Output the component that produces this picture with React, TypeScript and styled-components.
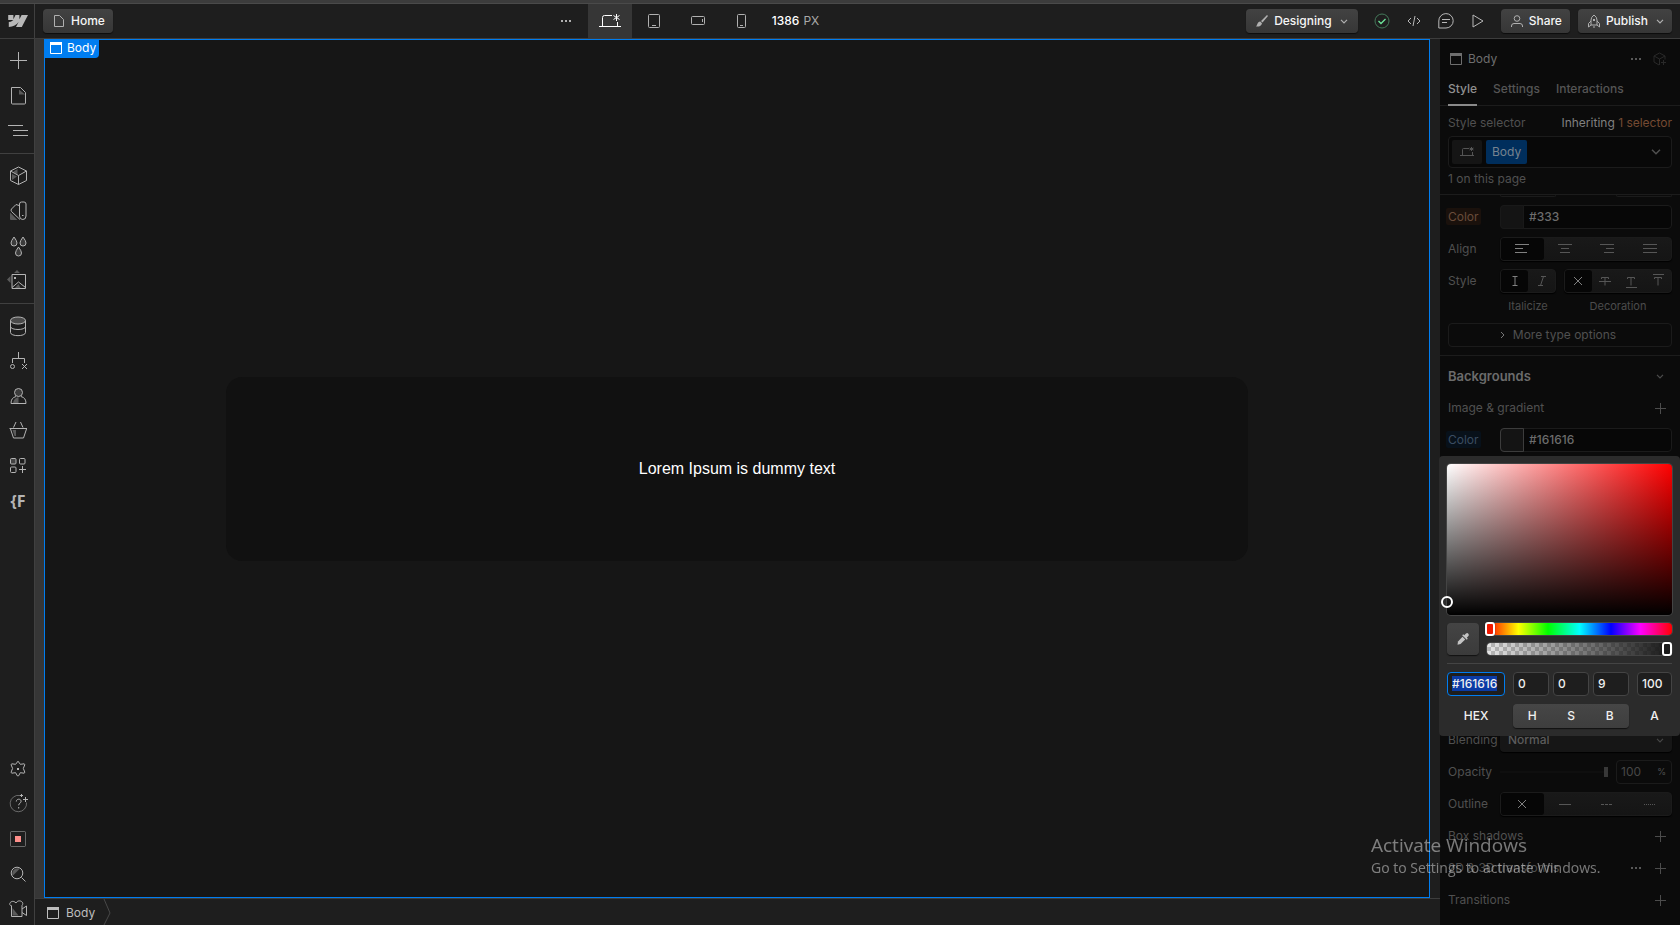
import React from "react";
import styled, { createGlobalStyle, css } from "styled-components";

const GlobalStyle = createGlobalStyle`
  *, *::before, *::after { box-sizing: border-box; }
  body { margin: 0; background: #1e1e1e; }
  body, button, input, select { font-family: Inter, "Liberation Sans", sans-serif; font-size: 12px; line-height: 16px; }
  button { border: 0; padding: 0; background: none; color: inherit; }
  h1, h2, p { margin: 0; }
`;

/* ---------- Icons ---------- */

type IconProps = { w?: number; h?: number; children: React.ReactNode };

const Svg = styled.svg`
  display: block;
  flex: none;
  fill: none;
  stroke: currentColor;
  stroke-width: 1;
  overflow: visible;
`;

const Icon = ({ w = 20, h = 20, children }: IconProps) => (
  <Svg width={w} height={h} viewBox={`0 0 ${w} ${h}`} aria-hidden="true">
    {children}
  </Svg>
);

const soft = { fill: "currentColor", fillOpacity: 0.4, stroke: "none" };
const solid = { fill: "currentColor", stroke: "none" };

const LogoIcon = () => (
  <Icon w={20} h={12}>
    <path {...solid} d="M20 0l-6.200 12H8l2.600-5C8.500 9.800 5.300 11.600 0.800 12V7.100s2.900-.2 4.600-2H.2V0h5.200v4.200L7.500 0h3.900v4.200L13.600 0z" />
  </Icon>
);
const WindowIcon = () => (
  <Icon w={12} h={12}>
    <path d="M.5.5h11v11H.5z" />
    <path {...solid} d="M0 0h12v3H0z" />
  </Icon>
);
const DotsIcon = () => (
  <Icon w={10} h={2}>
    <path {...solid} d="M0 0h2v2H0zM4 0h2v2H4zM8 0h2v2H8z" />
  </Icon>
);
const ChevronDown = ({ big }: { big?: boolean }) =>
  big ? (
    <Icon w={10} h={6}><path strokeWidth="1.500" d="M1 .8l4 4 4-4" /></Icon>
  ) : (
    <Icon w={8} h={5}><path strokeWidth="1.200" d="M1 .8l3 3 3-3" /></Icon>
  );
const PlusIcon = () => (
  <Icon w={12} h={12}><path d="M6.500 1v11M1 6.500h11" /></Icon>
);
const CrossIcon = () => (
  <Icon w={10} h={10}><path d="M1 1l8 8M9 1l-8 8" /></Icon>
);
const DesktopIcon = () => (
  <Icon w={22} h={14}>
    <path d="M0 12.500h22M3.500 12V3.500q0-2 2-2h7.500M18.500 8v4" />
    <path d="M17.500 0v7M14.500 1.500l6 4M20.500 1.500l-6 4" />
  </Icon>
);

const rail = {
  add: <path d="M10.500 2v17M2 10.500h17" />,
  pages: <><path d="M3.500 2.500h9l5 5v10.500q0 1-1 1h-12q-1 0-1-1z" /><path {...soft} d="M11 4.500v5h6z" /></>,
  navigator: <path d="M0 5.500h15M5 10.500h15M5 15.500h15" />,
  cube: <><path d="M10.500 2l8 4v9.500l-8 4-8-4V6zM2.500 6l8 4.500 8-4.500M10.500 10.500v9" /><path {...soft} d="M9.500 4v5.500L5 7zM4 9l5 2.500-5 3.500z" /></>,
  styles: <><path d="M11.500 4q0-2 2-2h2.500q2 0 2 2v12q0 3.500-3.200 3.500T11.500 16zM11 5.500L8 4.500 3.500 9q-1 1 0 2.500l8.500 8" /><path d="M14 15.500h1.500" /><path {...soft} d="M2 12.500l7.500 7.500H3q-1 0-1-1z" /></>,
  drops: <>{[[6, 2], [15, 2], [10.500, 12]].map(([x, y]) => <path key={x} fill="currentColor" fillOpacity=".2" d={`M${x} ${y}q-3 4-3 6a3 3 0 0 0 6 0q0-2-3-6z`} />)}</>,
  image: <><path d="M4 4.500h13.500v14H4zM4 17.500l6.500-5.500 7 5.500" /><path {...solid} d="M6 7h2v2H6z" /><path {...soft} d="M6 3l3-3 3 3zM2.500 6v7L-1 9.500zM7 18l3.500-4 2 4z" /></>,
  database: <><ellipse cx="10" cy="4.500" rx="7.500" ry="3.500" fill="currentColor" fillOpacity=".3" /><path d="M2.500 4.500v12c0 4.200 15 4.200 15 0v-12M2.500 10.500c0 4 15 4 15 0" /></>,
  logic: <><path d="M10.500 1v6.500M4.500 12V7.500h12V12M14 13l5 5M19 13l-5 5" /><circle cx="4.500" cy="15.500" r="2" /></>,
  user: <><circle cx="10.500" cy="6.500" r="4" fill="currentColor" fillOpacity=".2" /><path d="M8 10.500c-3.500 1-5 3-5 7h15c0-4-1.500-6-5-7" /><path {...soft} d="M10.500 11v6H5q1-5 5.500-6z" /></>,
  basket: <><path d="M1.500 7.500h17.500M2.500 8l3 9h10l3-9M5.500 6.500L8 1M15 6.500L12.500 1" /><path {...soft} d="M4.500 9H8v6H6.500z" /></>,
  apps: <><rect x="2.500" y="2.500" width="5.500" height="5.500" rx="1" fill="currentColor" fillOpacity=".25" /><rect x="11.500" y="2.500" width="5.500" height="5.500" rx="1" /><rect x="2.500" y="11" width="5.500" height="5.500" rx="1" /><path d="M14.500 10v7M11 13.500h7" /></>,
  gear: <><path d="M10 2.200l2.300 3.100 3.900-.5.600 1-1.500 3.600 1.500 3.800-.600 1-3.900-.5-1.700 3.100H9.300l-1.700-3.100-3.900.5-.6-1 1.500-3.800-1.500-3.600.6-1 3.900.5z" /><path {...solid} d="M9 9h2v2H9z" /></>,
  help: <><path opacity=".5" d="M12 1.500a8.200 8.200 0 1 0 6.500 7" /><path d="M8.300 7.500c0-3 4.800-3 4.800-.2 0 2-2.400 1.800-2.400 4M10.700 13v1.500M17.500 3v5M15 5.500h5M13.500 0v3M12 1.500h3" /></>,
  stop: <><rect x="2.500" y="2.500" width="15" height="15" rx="1" opacity=".5" /><path fill="#ff8f8b" stroke="none" d="M7 7h6v6H7z" /></>,
  search: <><circle cx="9" cy="9" r="5.800" /><path d="M13.500 13.500l4 4" /><path {...soft} d="M4.500 12L12 4.500C7 3 3 7 4.500 12z" /></>,
  camera: <><path d="M3.500 6.500V17.500h10.500V6.500M14 10l4.500-3v9.500l-4.500-3M3.500 7C-1 5.500 4-.5 8 4c2.500-4.500 9-1 6 2.500" /><path {...soft} d="M4.500 9v7.500h6z" /></>,
};

/* ---------- Shell ---------- */

const Shell = styled.div`
  height: 100vh;
  display: flex;
  flex-direction: column;
  overflow: hidden;
  background: #1e1e1e;
  color: #f0f0f0;
  border-top: 3px solid #3c3c3c;
`;

const TopBar = styled.header`
  flex: none;
  display: flex;
  height: 36px;
  border-top: 1px solid #4a4a4a;
  border-bottom: 1px solid #3d3d3d;
`;

const LogoLink = styled.a`
  flex: none;
  display: grid;
  place-items: center;
  width: 35px;
  padding-left: 2px;
  border-right: 1px solid #404040;
  color: #b8b8b8;
`;

const BarStart = styled.div`
  flex: 37 1 0;
  display: flex;
  align-items: center;
  padding-left: 8px;
`;

const BarEnd = styled.div`
  flex: 63 1 0;
  display: flex;
  align-items: center;
  justify-content: flex-end;
  gap: 8px;
  padding-right: 8px;
`;

const RaisedButton = styled.button`
  display: flex;
  align-items: center;
  gap: 6px;
  height: 24px;
  padding: 0 8px 0 10px;
  border-radius: 4px;
  background: linear-gradient(#424242, #363636);
  box-shadow: 0 1px 1px #0c0c0c;
  font-weight: 500;
  color: #f5f5f5;
  svg { color: #b0b0b0; }
`;

const Breakpoints = styled.nav`
  display: flex;
  align-items: stretch;
`;

const Breakpoint = styled.button<{ $active?: boolean }>`
  display: grid;
  place-items: center;
  width: 44px;
  background: ${(p) => (p.$active ? "#363636" : "none")};
  color: ${(p) => (p.$active ? "#fff" : "#b0b0b0")};
`;

const CanvasWidth = styled.p`
  display: flex;
  align-items: center;
  gap: 4px;
  padding-left: 8px;
  color: #a8a8a8;
  strong { font-weight: 500; color: #fff; }
`;

const Tools = styled.div`
  display: flex;
  align-items: center;
  gap: 4px;
  margin: 0 1px 0 2px;
`;

const ToolButton = styled.button<{ $color?: string }>`
  display: grid;
  place-items: center;
  width: 28px;
  height: 24px;
  color: ${(p) => p.$color ?? "#b8b8b8"};
`;

const Main = styled.div`
  flex: 1;
  min-height: 0;
  display: flex;
`;

const Rail = styled.nav`
  flex: none;
  width: 35px;
  display: flex;
  flex-direction: column;
  border-right: 1px solid #404040;
  color: #b4b4b4;
`;

const RailGroup = styled.div<{ $last?: boolean }>`
  padding: 3px 0 6px;
  border-bottom: 1px solid #404040;
  ${(p) => p.$last && css`padding-top: 4px; border-bottom: 0;`}
`;

const RailFooter = styled.div`
  margin: auto 0 -1px;
`;

const RailButton = styled.button`
  display: grid;
  place-items: center;
  width: 34px;
  height: 35px;
  padding-left: 2px;
`;

const BraceText = styled.span`
  font: 700 16px/20px "Noto Sans", sans-serif;
`;

const Workspace = styled.div`
  flex: 1;
  min-width: 0;
  display: flex;
  flex-direction: column;
`;

const Stage = styled.div`
  flex: 1;
  display: flex;
  border-left: 9px solid #363636;
  padding-right: 10px;
`;

const Canvas = styled.main`
  position: relative;
  flex: 1;
  display: grid;
  place-items: center;
  background: #161616;
  border: 1px solid #007df0;
`;

const CanvasTag = styled.div`
  position: absolute;
  top: -1px;
  left: -1px;
  display: flex;
  align-items: center;
  gap: 5px;
  height: 19px;
  padding: 0 3px 1px 6px;
  border-radius: 0 0 4px 0;
  background: #007df0;
  color: #fff;
`;

const Card = styled.section`
  display: grid;
  place-items: center;
  width: 74%;
  max-width: 1022px;
  height: 184px;
  border-radius: 16px;
  background: #111111;
  color: #fff;
  font: 16px/24px "Liberation Sans", Arial, sans-serif;
`;

const Crumbs = styled.footer`
  flex: none;
  display: flex;
  height: 27px;
  border-top: 1px solid #3d3d3d;
  color: #bdbdbd;
`;

const Crumb = styled.button`
  display: flex;
  align-items: center;
  gap: 7px;
  padding: 2px 8px 0 12px;
`;

/* ---------- Style panel ---------- */

const Panel = styled.aside`
  flex: none;
  width: 240px;
  background: #0b0b0b;
  color: #505050;
`;

const PanelHeader = styled.div`
  display: flex;
  align-items: center;
  height: 40px;
  padding: 0 13px 0 10px;
  gap: 6px;
  color: #6e6e6e;
`;

const PanelTitle = styled.h1`
  flex: 1;
  font-size: 12px;
  font-weight: 400;
`;

const HeaderAction = styled.button<{ $dim?: boolean }>`
  margin-left: 6px;
  color: ${(p) => (p.$dim ? "#292929" : "#585858")};
`;

const Tabs = styled.div`
  display: flex;
  gap: 16px;
  height: 27px;
  padding: 0 8px;
  border-bottom: 1px solid #1c1c1c;
`;

const Tab = styled.button<{ $active?: boolean }>`
  height: 27px;
  padding: 2px 0 7px;
  font-weight: 500;
  color: ${(p) => (p.$active ? "#909090" : "#555")};
  border-bottom: 2px solid ${(p) => (p.$active ? "#8a8a8a" : "transparent")};
`;

const Selector = styled.section`
  height: 89px;
  padding: 9px 8px 0;
  border-bottom: 1px solid #1c1c1c;
`;

const SelectorHead = styled.div`
  display: flex;
  justify-content: space-between;
  margin-bottom: 5px;
`;

const Inherit = styled.button`
  color: #808080;
  span { color: #754a32; }
`;

const SelectorBox = styled.div`
  display: flex;
  align-items: center;
  gap: 4px;
  height: 32px;
  margin-bottom: 3px;
  padding: 0 10px 0 3px;
  border: 1px solid #1b1b1b;
  border-radius: 4px;
  background: #080808;
`;

const Chip = styled.button<{ $accent?: boolean }>`
  display: grid;
  place-items: center;
  height: 24px;
  min-width: 30px;
  padding: 0 6px;
  border-radius: 2px;
  background: ${(p) => (p.$accent ? "#002e5c" : "#151515")};
  color: ${(p) => (p.$accent ? "#77838f" : "#555")};
`;

const Grow = styled.span`
  flex: 1;
`;

const Cutoff = styled.div`
  display: flex;
  justify-content: space-between;
  height: 6px;
  padding: 0 8px 0 60px;
  i {
    width: 56px;
    height: 2px;
    border: 1px solid #1b1b1b;
    border-top: 0;
    border-radius: 0 0 4px 4px;
  }
`;

const Row = styled.div`
  display: flex;
  align-items: center;
  height: 32px;
  padding: 0 8px;
`;

const LabelCell = styled.div`
  flex: none;
  width: 52px;
`;

const Label = styled.label<{ $tone?: "orange" | "blue" }>`
  color: #505050;
  ${(p) =>
    p.$tone &&
    css`
      margin-left: -2px;
      padding: 1px 2px;
      border-radius: 2px;
      color: ${p.$tone === "orange" ? "#694c3a" : "#3b4d61"};
      background: ${p.$tone === "orange" ? "#1a110c" : "#08111a"};
    `}
`;

const ColorField = styled.div<{ $lit?: boolean }>`
  flex: 1;
  min-width: 0;
  display: flex;
  height: 24px;
  border: 1px solid #1b1b1b;
  border-radius: 4px;
  background: #070707;
  button {
    flex: none;
    width: 24px;
    margin: -1px 0 -1px -1px;
    border-radius: 4px 0 0 4px;
    background: #141414;
    border: 1px solid ${(p) => (p.$lit ? "#3c3c3c" : "#191919")};
  }
  input {
    flex: 1;
    min-width: 0;
    padding: 0 5px;
    border: 0;
    background: none;
    font-weight: 500;
    color: #6c6c6c;
  }
`;

const Segments = styled.div<{ $width?: number }>`
  display: flex;
  flex: ${(p) => (p.$width ? "none" : "1")};
  width: ${(p) => (p.$width ? `${p.$width}px` : "auto")};
  height: 24px;
  border: 1px solid #1b1b1b;
  border-radius: 4px;
  background: linear-gradient(#191919, #151515);
  box-shadow: 0 1px 1px #000;
`;

const Segment = styled.button<{ $active?: boolean }>`
  flex: 1;
  display: grid;
  place-items: center;
  border-radius: 3px;
  background: ${(p) => (p.$active ? "#060606" : "none")};
  color: ${(p) => (p.$active ? "#808080" : "#565656")};
`;

const Captions = styled.div`
  display: flex;
  height: 22px;
  padding: 1px 8px 0 60px;
  font-size: 11px;
  color: #4c4c4c;
  span { flex: 108; text-align: center; }
  span:first-child { flex: 56; margin-right: 8px; }
`;

const MoreButton = styled.button`
  display: flex;
  align-items: center;
  justify-content: center;
  gap: 8px;
  width: 224px;
  height: 24px;
  margin: 4px 8px 8px;
  padding-right: 4px;
  border: 1px solid #1b1b1b;
  border-radius: 4px;
  color: #505050;
`;

const Section = styled.section`
  border-top: 1px solid #1c1c1c;
  padding-top: 4px;
`;

const SectionTitle = styled.h2`
  flex: 1;
  font-size: 13px;
  line-height: 16px;
  font-weight: 600;
  color: #6c6c6c;
`;

const RowTitle = styled.span`
  flex: 1;
`;

const RowAction = styled.button`
  display: grid;
  place-items: center;
  width: 12px;
  margin: 0 6px 0 13px;
  color: #4c4c4c;
`;

const SelectBox = styled.div`
  position: relative;
  flex: 1;
  height: 24px;
  color: #474747;
  select {
    appearance: none;
    width: 100%;
    height: 24px;
    padding: 0 8px;
    border: 0;
    border-radius: 4px;
    background: #161616;
    box-shadow: 0 1px 1px #000;
    font-weight: 500;
    color: #5c5c5c;
  }
  svg { position: absolute; right: 8px; top: 10px; }
`;

const OpacityRange = styled.input`
  appearance: none;
  width: 108px;
  height: 12px;
  margin: 0 8px 0 0;
  background: linear-gradient(#0f0f0f, #0f0f0f) center / 100% 2px no-repeat;
  &::-webkit-slider-thumb {
    appearance: none;
    width: 4px;
    height: 10px;
    background: #383838;
  }
`;

const UnitField = styled.div`
  display: flex;
  align-items: center;
  flex: 1;
  min-width: 0;
  height: 24px;
  padding: 0 5px 0 4px;
  border: 1px solid #1b1b1b;
  border-radius: 4px;
  input {
    width: 30px;
    flex: 1;
    padding: 0;
    border: 0;
    background: none;
    color: #474747;
  }
  span { font-size: 9px; }
`;

/* ---------- Colour picker ---------- */

const Picker = styled.div`
  position: relative;
  z-index: 1;
  margin: 0 0 -12px -1px;
  padding: 8px;
  border-radius: 4px;
  background: #2b2b2b;
  color: #f0f0f0;
  font-weight: 500;
`;

const Saturation = styled.div`
  position: relative;
  height: 151px;
  border-radius: 4px;
  background: linear-gradient(transparent, #000), linear-gradient(90deg, #fff, #f00);
  box-shadow: 0 0 0 1px #444;
`;

const Knob = styled.button`
  position: absolute;
  left: -6px;
  bottom: 7px;
  width: 12px;
  height: 12px;
  border: 2px solid #fff;
  border-radius: 50%;
`;

const PickerRow = styled.div`
  display: flex;
  gap: 8px;
  padding: 8px 0;
  border-bottom: 1px solid #444;
`;

const Dropper = styled.button`
  flex: none;
  display: grid;
  place-items: center;
  width: 32px;
  height: 32px;
  border-radius: 4px;
  background: linear-gradient(#444, #3b3b3b);
  box-shadow: 0 1px 1px #111;
  color: #c4c4c4;
`;

const Sliders = styled.div`
  flex: 1;
  min-width: 0;
  display: flex;
  flex-direction: column;
  justify-content: space-between;
`;

const slider = css`
  appearance: none;
  display: block;
  width: 100%;
  height: 12px;
  margin: 0;
  border-radius: 4px;
  box-shadow: 0 0 0 1px #444;
  &::-webkit-slider-thumb {
    appearance: none;
    width: 10px;
    height: 14px;
    border: 2px solid #fff;
    border-radius: 3px;
    background: var(--thumb);
    box-shadow: 0 0 1px #000;
  }
`;

const HueRange = styled.input`
  ${slider}
  --thumb: #f01800;
  background: linear-gradient(90deg, #f00, #ff0 17%, #0f0 33%, #0ff 50%, #00f 67%, #f0f 83%, #f00);
  &::-webkit-slider-thumb { margin-left: -2px; }
`;

const AlphaRange = styled.input`
  ${slider}
  --thumb: #1c1c1c;
  background:
    linear-gradient(90deg, rgba(22, 22, 22, 0), #161616),
    repeating-conic-gradient(#b8b8b8 0 25%, #e6e6e6 0 50%) 0 0 / 8px 8px;
`;

const ValueGrid = styled.div`
  display: grid;
  grid-template-columns: 58px 8px 36px 4px 36px 4px 36px 8px 35px;
  row-gap: 8px;
  padding-top: 8px;
`;

const ValueInput = styled.input<{ $focus?: boolean }>`
  width: 100%;
  min-width: 0;
  height: 24px;
  padding: 0 4px 1px;
  border: 1px solid ${(p) => (p.$focus ? "#007df0" : "#444")};
  border-radius: 4px;
  outline: 0;
  background: #1e1e1e;
  color: #f0f0f0;
  font-weight: 500;
`;

const HexField = styled.div`
  height: 24px;
  input::selection { background: #0b3ba5; color: #f0f0f0; }
`;

const ModeLabel = styled.label`
  text-align: center;
  line-height: 24px;
`;

const ModeGroup = styled.div`
  grid-column: 3 / 8;
  display: flex;
  height: 24px;
  border-radius: 4px;
  background: linear-gradient(#464646, #3e3e3e);
  box-shadow: 0 1px 1px #111;
  label { flex: 1; text-align: center; line-height: 24px; }
`;

const Watermark = styled.div`
  position: fixed;
  right: 72px;
  bottom: 47px;
  width: 237px;
  white-space: nowrap;
  color: rgba(255, 255, 255, 0.45);
  font: 14px/20px "Open Sans", "Noto Sans", sans-serif;
  pointer-events: none;
  p:first-child { font-size: 19px; line-height: 26px; }
`;

/* ---------- Parts ---------- */

const railItem = (name: keyof typeof rail, title: string) => (
  <RailButton key={name} aria-label={title}>
    <Icon>{rail[name]}</Icon>
  </RailButton>
);

const alignments = [
  { name: "Left", path: "M0 1.500h14M0 5.500h8M0 9.500h12" },
  { name: "Center", path: "M0 1.500h14M3 5.500h8M2 9.500h10" },
  { name: "Right", path: "M0 1.500h14M6 5.500h8M4 9.500h10" },
  { name: "Justify", path: "M0 1.500h14M0 5.500h14M0 9.500h14" },
];

const ColorPicker = () => {
  const hex = React.useRef<HTMLInputElement>(null);
  React.useEffect(() => {
    hex.current?.focus();
    hex.current?.select();
  }, []);
  return (
    <Picker role="dialog" aria-label="Color picker">
      <Saturation><Knob aria-label="Saturation and brightness" /></Saturation>
      <PickerRow>
        <Dropper aria-label="Pick a color">
          <Icon w={12} h={12}>
            <path {...solid} d="M5.500 3.800l2.700 2.700-4.700 4.500L.5 11.700 1 8.500z" />
            <path {...solid} d="M5.200 2.200l1-1 1 1L9 .6a1.700 1.700 0 0 1 2.400 2.400L9.800 4.800l1 1-1 1z" />
          </Icon>
        </Dropper>
        <Sliders>
          <HueRange type="range" min={0} max={360} defaultValue={0} aria-label="Hue" />
          <AlphaRange type="range" min={0} max={100} defaultValue={100} aria-label="Alpha" />
        </Sliders>
      </PickerRow>
      <ValueGrid>
        <HexField>
          <ValueInput id="hex" ref={hex} $focus defaultValue="#161616" />
        </HexField>
        <span />
        <ValueInput id="hue" defaultValue="0" />
        <span />
        <ValueInput id="sat" defaultValue="0" />
        <span />
        <ValueInput id="bri" defaultValue="9" />
        <span />
        <ValueInput id="alpha" defaultValue="100" />
        <ModeLabel htmlFor="hex">HEX</ModeLabel>
        <ModeGroup>
          <label htmlFor="hue">H</label>
          <label htmlFor="sat">S</label>
          <label htmlFor="bri">B</label>
        </ModeGroup>
        <span />
        <ModeLabel htmlFor="alpha">A</ModeLabel>
      </ValueGrid>
    </Picker>
  );
};

const StylePanel = () => (
  <Panel>
    <PanelHeader>
      <WindowIcon />
      <PanelTitle>Body</PanelTitle>
      <HeaderAction aria-label="More"><DotsIcon /></HeaderAction>
      <HeaderAction $dim aria-label="Create component">
        <Icon w={14} h={14}>
          <path d="M6.500 1l5.500 3v3.500M6.500 1L1 4v6l5 3M1 4l5.500 3L12 4M6.500 7v6M10.500 8v5M8 10.500h5" />
        </Icon>
      </HeaderAction>
    </PanelHeader>
    <Tabs role="tablist">
      <Tab role="tab" aria-selected $active>Style</Tab>
      <Tab role="tab">Settings</Tab>
      <Tab role="tab">Interactions</Tab>
    </Tabs>
    <Selector>
      <SelectorHead>
        <span>Style selector</span>
        <Inherit>Inheriting <span>1 selector</span></Inherit>
      </SelectorHead>
      <SelectorBox>
        <Chip aria-label="Base breakpoint">
          <Icon w={16} h={12}>
            <path d="M1 9.500h14M3.500 9V3.500q0-1 1-1H10M13.500 6v3M12.500 1v4M10.500 2l4 2M14.500 2l-4 2" />
          </Icon>
        </Chip>
        <Chip $accent>Body</Chip>
        <Grow />
        <ChevronDown big />
      </SelectorBox>
      <p>1 on this page</p>
    </Selector>
    <Cutoff><i /><i /></Cutoff>
    <Row>
      <LabelCell><Label $tone="orange" htmlFor="text-color">Color</Label></LabelCell>
      <ColorField>
        <button aria-label="Text color swatch" />
        <input id="text-color" defaultValue="#333" />
      </ColorField>
    </Row>
    <Row>
      <LabelCell>Align</LabelCell>
      <Segments>
        {alignments.map((a, i) => (
          <Segment key={a.name} $active={i === 0} aria-label={a.name}>
            <Icon w={14} h={12}><path d={a.path} /></Icon>
          </Segment>
        ))}
      </Segments>
    </Row>
    <Row>
      <LabelCell>Style</LabelCell>
      <Segments $width={56}>
        <Segment $active aria-label="Regular"><Icon w={6} h={10}><path d="M3 .5v9M.5.5h5M.5 9.500h5" /></Icon></Segment>
        <Segment aria-label="Italic"><Icon w={8} h={10}><path d="M5.500.5l-3 9M3 .5h5M0 9.500h5" /></Icon></Segment>
      </Segments>
      <Grow />
      <Segments $width={108}>
        <Segment $active aria-label="None"><CrossIcon /></Segment>
        <Segment aria-label="Strikethrough"><Icon w={12} h={10}><path d="M2.500 3V1.500h7V3M0 5.500h12M6 1.500v8" /></Icon></Segment>
        <Segment aria-label="Underline"><Icon w={12} h={14}><path d="M2.500 5V3.500h7V5M6 3.500v8M1 13.500h11" /></Icon></Segment>
        <Segment aria-label="Overline"><Icon w={12} h={14}><path d="M2.500 5V3.500h7V5M6 3.500v8M1 .5h11" /></Icon></Segment>
      </Segments>
    </Row>
    <Captions><span>Italicize</span><span>Decoration</span></Captions>
    <MoreButton>
      <Icon w={5} h={8}><path d="M1 1l3 3-3 3" stroke="#777" /></Icon>
      More type options
    </MoreButton>
    <Section>
      <Row>
        <SectionTitle>Backgrounds</SectionTitle>
        <RowAction aria-label="Collapse"><ChevronDown /></RowAction>
      </Row>
      <Row>
        <RowTitle>Image &amp; gradient</RowTitle>
        <RowAction aria-label="Add background"><PlusIcon /></RowAction>
      </Row>
      <Row>
        <LabelCell><Label $tone="blue" htmlFor="bg-color">Color</Label></LabelCell>
        <ColorField $lit>
          <button aria-label="Background color swatch" />
          <input id="bg-color" defaultValue="#161616" />
        </ColorField>
      </Row>
    </Section>
    <ColorPicker />
    <Row>
      <LabelCell><Label htmlFor="blending">Blending</Label></LabelCell>
      <SelectBox>
        <select id="blending" defaultValue="Normal"><option>Normal</option></select>
        <ChevronDown />
      </SelectBox>
    </Row>
    <Row>
      <LabelCell><Label htmlFor="opacity">Opacity</Label></LabelCell>
      <OpacityRange type="range" defaultValue={100} aria-label="Opacity slider" />
      <UnitField><input id="opacity" defaultValue="100" /><span>%</span></UnitField>
    </Row>
    <Row>
      <LabelCell>Outline</LabelCell>
      <Segments>
        <Segment $active aria-label="None"><CrossIcon /></Segment>
        <Segment aria-label="Solid"><Icon w={12} h={1}><path d="M0 .5h12" /></Icon></Segment>
        <Segment aria-label="Dashed"><Icon w={12} h={1}><path strokeDasharray="3 1" d="M0 .5h12" /></Icon></Segment>
        <Segment aria-label="Dotted"><Icon w={12} h={1}><path strokeDasharray="1 1" d="M0 .5h12" /></Icon></Segment>
      </Segments>
    </Row>
    <Row><RowTitle>Box shadows</RowTitle><RowAction aria-label="Add shadow"><PlusIcon /></RowAction></Row>
    <Row>
      <RowTitle>2D &amp; 3D transforms</RowTitle>
      <HeaderAction aria-label="Transform settings"><DotsIcon /></HeaderAction>
      <RowAction aria-label="Add transform"><PlusIcon /></RowAction>
    </Row>
    <Row><RowTitle>Transitions</RowTitle><RowAction aria-label="Add transition"><PlusIcon /></RowAction></Row>
  </Panel>
);

export default function App() {
  return (
    <>
      <GlobalStyle />
      <Shell>
        <TopBar>
          <LogoLink href="#" aria-label="Dashboard"><LogoIcon /></LogoLink>
          <BarStart>
            <RaisedButton>
              <Icon w={12} h={12}><path d="M1.500.5h5l4 4v7h-9z" /></Icon>
              Home
            </RaisedButton>
          </BarStart>
          <Breakpoints>
            <Breakpoint aria-label="More breakpoints"><DotsIcon /></Breakpoint>
            <Breakpoint $active aria-label="Desktop"><DesktopIcon /></Breakpoint>
            <Breakpoint aria-label="Tablet"><Icon w={12} h={14}><path d="M.5 1.500q0-1 1-1h9q1 0 1 1v11q0 1-1 1h-9q-1 0-1-1zM4 11.500h4" /></Icon></Breakpoint>
            <Breakpoint aria-label="Mobile landscape"><Icon w={14} h={10}><path d="M.5 1.500q0-1 1-1h11q1 0 1 1v6q0 1-1 1h-11q-1 0-1-1zM11.500 3v3" /></Icon></Breakpoint>
            <Breakpoint aria-label="Mobile portrait"><Icon w={10} h={14}><path d="M.5 1.500q0-1 1-1h6q1 0 1 1v11q0 1-1 1h-6q-1 0-1-1zM3 11.500h3" /></Icon></Breakpoint>
            <CanvasWidth><strong>1386</strong> PX</CanvasWidth>
          </Breakpoints>
          <BarEnd>
            <RaisedButton>
              <Icon w={12} h={12}>
                <path {...solid} d="M11 0l1 1-5.500 6.500L5 6zM4.300 6.500L6 8.200C5.500 11 3 12 0 11.500 1.500 10.500 1 7 4.300 6.500z" />
              </Icon>
              Designing
              <Icon w={12} h={5}><path strokeWidth="1.200" d="M3 .8l3 3 3-3" /></Icon>
            </RaisedButton>
            <Tools>
              <ToolButton $color="#44795a" aria-label="Status">
                <Icon w={16} h={16}><circle cx="8" cy="8" r="7" /><path stroke="#6ee79b" strokeWidth="1.300" d="M4.500 8l2.500 2.500L11.500 6" /></Icon>
              </ToolButton>
              <ToolButton aria-label="Code"><Icon w={14} h={10}><path d="M4 2L1 5l3 3M10 2l3 3-3 3M8 0L6 10" /></Icon></ToolButton>
              <ToolButton aria-label="Comments"><Icon w={16} h={16}><path d="M.8 15V8A7.200 7.200 0 1 1 8 15zM4 6.500h8M4 9.500h5" /></Icon></ToolButton>
              <ToolButton aria-label="Preview"><Icon w={12} h={14}><path d="M1 1v12l10-6z" /></Icon></ToolButton>
            </Tools>
            <RaisedButton>
              <Icon w={12} h={12}><circle cx="6" cy="3.500" r="2.800" /><path d="M.5 12v-1q0-2.500 2.500-2.500h6q2.500 0 2.500 2.500v1" /></Icon>
              Share
            </RaisedButton>
            <RaisedButton>
              <Icon w={12} h={12}><path d="M3 10V5q0-3 3-5 3 2 3 5v5M3 6L.5 8.500V12L3 10h6l2.500 2V8.500L9 6M5 12h2" /><path {...solid} d="M5 4h2v2H5z" /></Icon>
              Publish
              <Icon w={10} h={5}><path strokeWidth="1.200" d="M3 .8l3 3 3-3" /></Icon>
            </RaisedButton>
          </BarEnd>
        </TopBar>
        <Main>
          <Rail>
            <RailGroup>
              {railItem("add", "Add elements")}
              {railItem("pages", "Pages")}
              {railItem("navigator", "Navigator")}
            </RailGroup>
            <RailGroup>
              {railItem("cube", "Components")}
              {railItem("styles", "Variables")}
              {railItem("drops", "Style manager")}
              {railItem("image", "Assets")}
            </RailGroup>
            <RailGroup $last>
              {railItem("database", "CMS")}
              {railItem("logic", "Logic")}
              {railItem("user", "Users")}
              {railItem("basket", "Ecommerce")}
              {railItem("apps", "Apps")}
              <RailButton><BraceText>{"{F"}</BraceText></RailButton>
            </RailGroup>
            <RailFooter>
              {railItem("gear", "Settings")}
              {railItem("help", "Help")}
              {railItem("stop", "Audit")}
              {railItem("search", "Search")}
              {railItem("camera", "Tutorials")}
            </RailFooter>
          </Rail>
          <Workspace>
            <Stage>
              <Canvas>
                <CanvasTag><WindowIcon />Body</CanvasTag>
                <Card>Lorem Ipsum is dummy text</Card>
              </Canvas>
            </Stage>
            <Crumbs>
              <Crumb><WindowIcon />Body</Crumb>
              <Icon w={8} h={26}><path stroke="#484848" d="M1 0l6 14-6 12" /></Icon>
            </Crumbs>
          </Workspace>
          <StylePanel />
        </Main>
      </Shell>
      <Watermark>
        <p>Activate Windows</p>
        <p>Go to Settings to activate Windows.</p>
      </Watermark>
    </>
  );
}
